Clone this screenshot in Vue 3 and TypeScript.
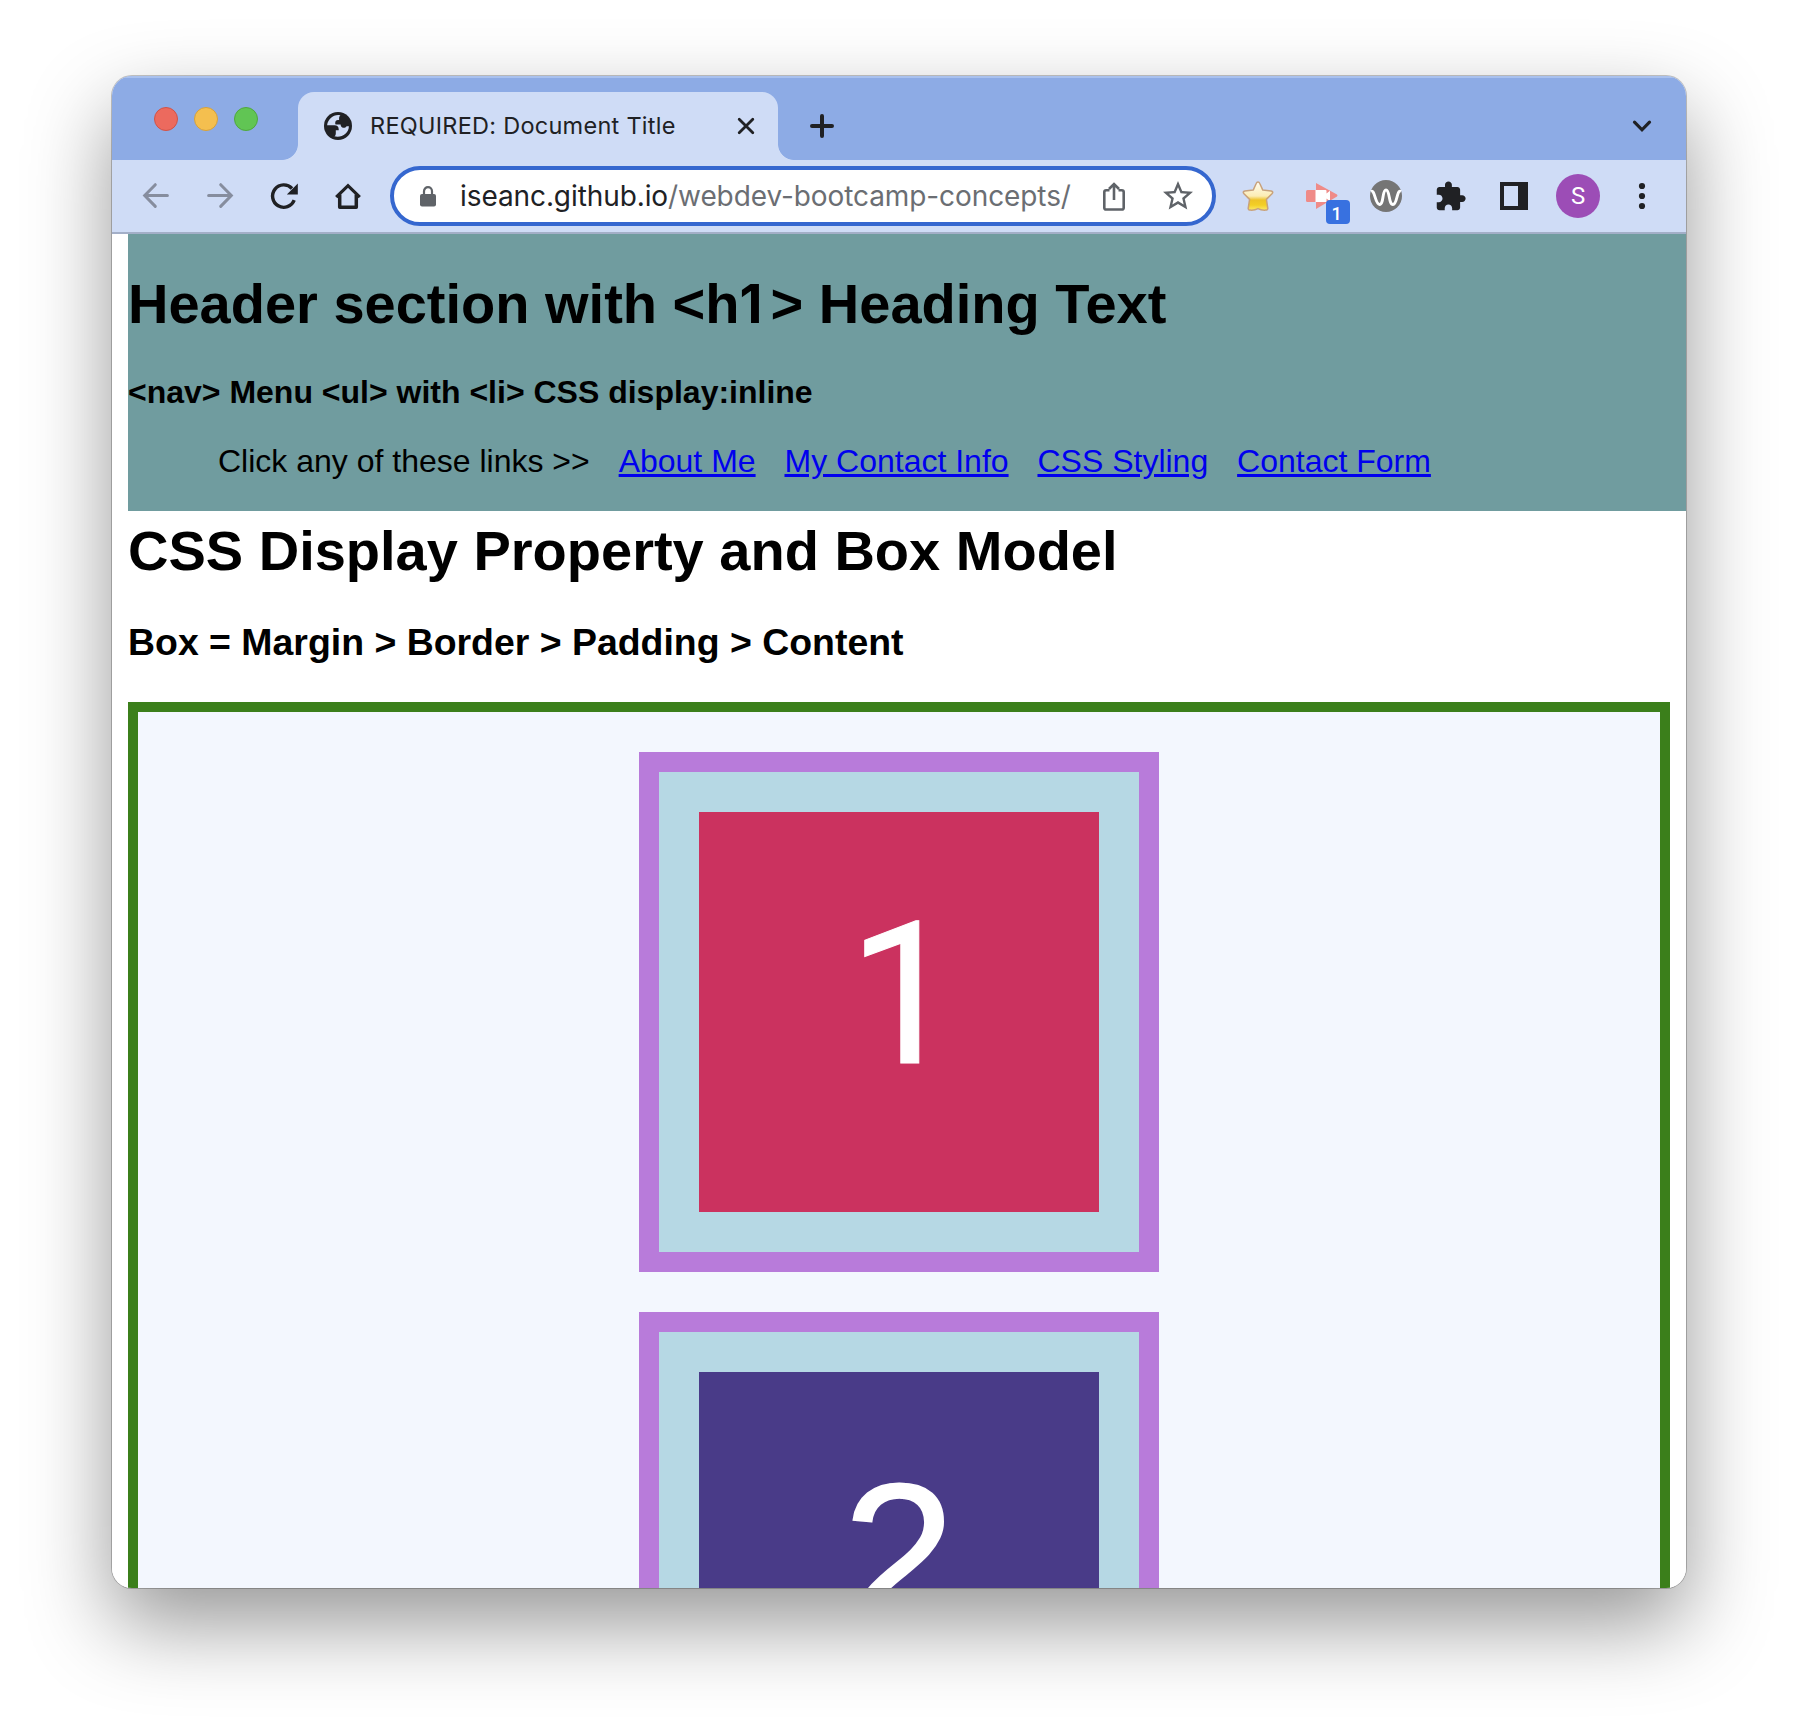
<script setup lang="ts">
interface NavLink {
  label: string
  href: string
}

const links: NavLink[] = [
  { label: 'About Me', href: '#about' },
  { label: 'My Contact Info', href: '#contact' },
  { label: 'CSS Styling', href: '#styling' },
  { label: 'Contact Form', href: '#form' },
]

const boxes: { digit: string; kind: string }[] = [
  { digit: '1', kind: 'one' },
  { digit: '2', kind: 'two' },
]
</script>

<template>
  <div class="desktop">
    <div class="window">
      <div class="tabstrip">
        <div class="lights">
          <span class="light red"></span>
          <span class="light yellow"></span>
          <span class="light green"></span>
        </div>
        <div class="tab">
          <svg class="globe" width="28" height="28" viewBox="0 0 28 28">
            <circle cx="14" cy="14" r="14" fill="#202124" />
            <path
              fill="#cfdcf6"
              d="M15.800 3.200C9.500 2.300 3.900 7 3.100 13.200h7.400c2.600 0 4.200 1.600 4.200 4v1.100h-2.900v3.200c0 1.500-.8 2.600-1.500 2.800C17.500 26.300 24.800 21.300 24.900 14.200h-2.300c-.9 1.200-2.300 1.900-3.700 1.500-1.500-.4-2.300-1.600-2.300-3.100h-4.300c-.8 0-1.100-.8-1.100-1.700 0-1.800 1.100-3 2.700-3h1.200V6.200c0-1.300.6-2.300 1.400-2.900z"
            />
          </svg>
          <span class="title">REQUIRED: Document Title</span>
          <svg class="close" width="20" height="20" viewBox="0 0 20 20">
            <path d="M3.200 3.200l13.600 13.600M16.800 3.200L3.200 16.800" stroke="#202124" stroke-width="2.800" stroke-linecap="round" />
          </svg>
        </div>
        <svg class="plus" width="24" height="24" viewBox="0 0 24 24">
          <path d="M12 2v20M2 12h20" stroke="#202124" stroke-width="4" stroke-linecap="round" />
        </svg>
        <svg class="chevron" width="20" height="14" viewBox="0 0 20 14">
          <path d="M2.500 3.200L10 10.800l7.500-7.600" fill="none" stroke="#202124" stroke-width="3.200" stroke-linecap="round" />
        </svg>
      </div>

      <div class="toolbar">
        <span class="slot">
          <svg width="32" height="32" viewBox="0 0 32 32" fill="none" stroke="#868d9e" stroke-width="3" stroke-linecap="round">
            <path d="M15.300 4.700L4.700 15.500l10.600 10.900M5 15.500h22.400" />
          </svg>
        </span>
        <span class="slot">
          <svg width="32" height="32" viewBox="0 0 32 32" fill="none" stroke="#868d9e" stroke-width="3" stroke-linecap="round">
            <path d="M16.700 4.700l10.600 10.800-10.600 10.900M27 15.500H4.600" />
          </svg>
        </span>
        <span class="slot">
          <svg width="32" height="32" viewBox="0 0 32 32">
            <path d="M26.200 20.200A11.200 11.200 0 1 1 24 8.500" fill="none" stroke="#202124" stroke-width="3.400" />
            <path d="M29.800 3.500v11H18.800z" fill="#202124" />
          </svg>
        </span>
        <span class="slot">
          <svg width="32" height="32" viewBox="0 0 32 32" fill="none" stroke="#202124" stroke-width="3.500">
            <path d="M4.200 17.200L16 5.700l11.800 11.500" stroke-width="3.200" />
            <path d="M7.700 14.500v12.800h16.600V14.500" stroke-linejoin="round" />
          </svg>
        </span>

        <div class="omnibox">
          <svg class="lock" width="16" height="22" viewBox="0 0 16 22">
            <path d="M4 10V6.200a4 4 0 0 1 8 0V10" fill="none" stroke="#5f6368" stroke-width="2.200" />
            <rect x="0" y="9" width="16" height="12.600" rx="2" fill="#5f6368" />
          </svg>
          <span class="url"><span class="host">iseanc.github.io</span>/webdev-bootcamp-concepts/</span>
          <svg class="share" width="32" height="32" viewBox="0 0 32 32" fill="none" stroke="#5f6368" stroke-width="2.600">
            <path d="M11.500 10.200H8.200c-1 0-1.900.8-1.900 1.800v15.700c0 1 .9 1.800 1.900 1.800h15.600c1 0 1.900-.8 1.900-1.800V12c0-1-.9-1.800-1.900-1.800h-3.300" />
            <path d="M16 20V4.500M11 9l5-5 5 5" />
          </svg>
          <svg class="fav" width="36" height="36" viewBox="0 0 24 24" fill="#5f6368">
            <path
              d="M22 9.240l-7.190-.62L12 2 9.190 8.630 2 9.240l5.460 4.730L5.820 21 12 17.270 18.180 21l-1.630-7.030L22 9.240zM12 15.400l-3.760 2.270 1-4.280-3.320-2.880 4.380-.38L12 6.100l1.710 4.040 4.380.38-3.320 2.880 1 4.280L12 15.400z"
            />
          </svg>
        </div>

        <span class="slot">
          <svg width="34" height="34" viewBox="0 0 34 34">
            <defs>
              <linearGradient id="gold" x1="0" y1="0" x2="0" y2="1">
                <stop offset="0" stop-color="#fffdf2" />
                <stop offset=".5" stop-color="#fcecb4" />
                <stop offset=".64" stop-color="#eec328" />
                <stop offset=".82" stop-color="#f3cf25" />
                <stop offset="1" stop-color="#fbe96a" />
              </linearGradient>
            </defs>
            <path
              d="M17 3q1.200 0 1.800 1.500l3 6.600 8.300 1q2.700.6.900 2.600l-5.600 5.700 1.400 9q-.2 1.900-2 1.700-4.600.3-7.800-1.500-3.200 1.800-7.800 1.500-1.800.2-2-1.700l1.400-9L3 14.700q-1.800-2 .9-2.600l8.300-1 3-6.600Q15.800 3 17 3z"
              fill="url(#gold)"
              stroke="#c8a27c"
              stroke-width="1.500"
              stroke-linejoin="round"
            />
          </svg>
        </span>
        <span class="slot">
          <svg width="32" height="32" viewBox="0 0 32 32">
            <path d="M10 3l21 11.500q1 1 0 2L10 29z" fill="#ef8b88" />
            <rect x="0" y="10" width="11" height="12" rx="1.500" fill="#ef8b88" />
            <path d="M9.500 10h10q1 0 1 1v2.500l3.500-2.700v10.400l-3.500-2.700V22h-11z" fill="#fff" />
          </svg>
          <span class="badge">1</span>
        </span>
        <span class="slot">
          <svg width="32" height="32" viewBox="0 0 32 32">
            <circle cx="16" cy="16" r="16" fill="#757575" />
            <path d="M1 11.500C5 9 5 24.500 9.500 24.500S12 10 16 10s2.500 14.500 7 14.500S26.500 9 31 11.500" fill="none" stroke="#fff" stroke-width="2.900" />
          </svg>
        </span>
        <span class="slot">
          <svg width="33" height="33" viewBox="0 0 24 24" fill="#202124">
            <path
              d="M20.500 11H19V7c0-1.100-.9-2-2-2h-4V3.500C13 2.120 11.880 1 10.500 1S8 2.120 8 3.500V5H4c-1.100 0-1.990.9-1.990 2v3.800H3.500c1.490 0 2.700 1.210 2.700 2.700s-1.210 2.700-2.700 2.700H2V20c0 1.100.9 2 2 2h3.800v-1.500c0-1.490 1.210-2.700 2.700-2.700 1.490 0 2.700 1.210 2.700 2.700V22H17c1.100 0 2-.9 2-2v-4h1.500c1.380 0 2.500-1.120 2.500-2.500S21.880 11 20.500 11z"
            />
          </svg>
        </span>
        <span class="slot">
          <svg width="28" height="28" viewBox="0 0 28 28">
            <path d="M0 0h28v28H0zM4 4v20h14V4z" fill="#202124" fill-rule="evenodd" />
          </svg>
        </span>
        <span class="slot"><span class="avatar">S</span></span>
        <span class="slot">
          <svg width="8" height="28" viewBox="0 0 8 28" fill="#202124">
            <circle cx="4" cy="4" r="3.100" />
            <circle cx="4" cy="14" r="3.100" />
            <circle cx="4" cy="24" r="3.100" />
          </svg>
        </span>
      </div>

      <div class="page">
        <header>
          <h1>Header section with &lt;h<span class="numeral">1</span>&gt; Heading Text</h1>
          <nav>
            <h4>&lt;nav&gt; Menu &lt;ul&gt; with &lt;li&gt; CSS display:inline</h4>
            <ul>
              <li>Click any of these links &gt;&gt;</li>
              {{ ' ' }}
              <template v-for="link in links" :key="link.label">
                <li><a :href="link.href">{{ link.label }}</a></li>
                {{ ' ' }}
              </template>
            </ul>
          </nav>
        </header>
        <main>
          <h1>CSS Display Property and Box Model</h1>
          <h3>Box = Margin &gt; Border &gt; Padding &gt; Content</h3>
          <section class="container">
            <div v-for="box in boxes" :key="box.digit" class="box">
              <div class="content" :class="box.kind"><span>{{ box.digit }}</span></div>
            </div>
          </section>
        </main>
      </div>
    </div>
  </div>
</template>

<style>
body {
  margin: 0;
  background: #fff;
}
</style>

<style scoped>
.desktop {
  box-sizing: border-box;
  width: 1798px;
  height: 1736px;
  padding: 76px 112px 0;
  overflow: hidden;
  background: #fff;
}
.window {
  display: flex;
  flex-direction: column;
  width: 1574px;
  height: 1512px;
  border-radius: 20px;
  overflow: hidden;
  background: #fff;
  box-shadow: 0 0 0 1px rgba(0, 0, 0, 0.22), 0 36px 84px rgba(0, 0, 0, 0.41);
}
svg {
  display: block;
  flex: none;
}
.tabstrip {
  display: flex;
  flex: none;
  height: 84px;
  background: #8dabe5;
  box-shadow: inset 0 2px 0 #a9c1ee;
}
.lights {
  display: flex;
  gap: 16px;
  width: 144px;
  padding: 31px 0 0 42px;
}
.light {
  box-sizing: border-box;
  width: 24px;
  height: 24px;
  border-radius: 50%;
  border: 1px solid;
}
.red {
  background: #ec6a5e;
  border-color: #d05347;
}
.yellow {
  background: #f4bf4f;
  border-color: #d5a13c;
}
.green {
  background: #61c554;
  border-color: #50a73e;
}
.tab {
  position: relative;
  display: flex;
  align-items: center;
  box-sizing: border-box;
  width: 480px;
  height: 68px;
  margin-top: 16px;
  padding-left: 26px;
  border-radius: 16px 16px 0 0;
  background: #cfdcf6;
}
.tab::before,
.tab::after {
  content: '';
  position: absolute;
  bottom: 0;
  width: 16px;
  height: 16px;
}
.tab::before {
  left: -16px;
  background: radial-gradient(circle at 0 0, transparent 15.500px, #cfdcf6 16.300px);
}
.tab::after {
  right: -16px;
  background: radial-gradient(circle at 100% 0, transparent 15.500px, #cfdcf6 16.300px);
}
.title {
  width: 366px;
  margin-left: 18px;
  font: 400 23.500px/32px Inter, Roboto, sans-serif;
  letter-spacing: 0.260px;
  color: #202124;
  white-space: nowrap;
}
.plus {
  margin: 38px 0 0 32px;
}
.chevron {
  margin: 43px 34px 0 auto;
}
.toolbar {
  display: flex;
  flex: none;
  align-items: center;
  box-sizing: border-box;
  height: 74px;
  padding: 0 12px;
  border-bottom: 2px solid #a3afc8;
  background: #cfdcf6;
}
.slot {
  position: relative;
  display: flex;
  flex: none;
  align-items: center;
  justify-content: center;
  width: 64px;
  height: 64px;
}
.omnibox {
  display: flex;
  flex: none;
  align-items: center;
  box-sizing: border-box;
  width: 826px;
  height: 60px;
  margin: 0 10px;
  padding-left: 26px;
  border: 4px solid #3567cf;
  border-radius: 30px;
  background: #fff;
}
.url {
  width: 638px;
  margin-left: 24px;
  font: 400 28px/40px Inter, Roboto, sans-serif;
  letter-spacing: -0.090px;
  color: #6b6e73;
  white-space: nowrap;
}
.host {
  color: #202124;
}
.fav {
  margin-left: 30px;
}
.badge {
  position: absolute;
  left: 36px;
  top: 36px;
  width: 24px;
  height: 24px;
  border-radius: 4px;
  background: #3871e0;
  color: #fff;
  font: 500 18px/27px Roboto, sans-serif;
  text-align: center;
  text-indent: -3px;
}
.avatar {
  width: 44px;
  height: 44px;
  border-radius: 50%;
  background: #9c4db6;
  color: #fff;
  font: 400 24px/45px Roboto, sans-serif;
  text-align: center;
}
.page {
  flex: 1;
  min-height: 0;
  padding-left: 16px;
  overflow: hidden;
  background: #fff;
  color: #000;
  font: 32px/36px 'Liberation Sans', Arial, Helvetica, sans-serif;
}
header {
  box-sizing: border-box;
  height: 277px;
  padding-top: 38px;
  background: #709c9f;
}
h1,
h3,
h4,
ul {
  margin: 0;
}
h1 {
  font-size: 56px;
  line-height: 64px;
  white-space: nowrap;
}
.numeral {
  display: inline-block;
  width: 0.585em;
  font-family: Inter, Roboto, sans-serif;
  font-size: 0.950em;
  line-height: 1;
}
h4 {
  margin-top: 38px;
  font-size: 32px;
  line-height: 36px;
}
ul {
  margin-top: 33px;
  padding-left: 80px;
  list-style: none;
  white-space: nowrap;
}
li {
  display: inline;
  padding: 0 10px;
}
a {
  color: #0000ee;
  text-decoration: underline;
  text-decoration-thickness: 3px;
}
main {
  padding-right: 16px;
}
main h1 {
  padding-top: 8px;
}
h3 {
  margin: 38px 0;
  font-size: 37.440px;
  line-height: 43px;
}
.container {
  display: flex;
  flex-direction: column;
  align-items: center;
  gap: 40px;
  height: 1400px;
  padding-top: 40px;
  border: 10px solid #3b7f1b;
  background: #f3f7fe;
}
.box {
  flex: none;
  width: 400px;
  height: 400px;
  padding: 40px;
  border: 20px solid #b87bda;
  background: #b6d8e4;
}
.content {
  height: 400px;
  color: #fff;
  text-align: center;
}
.one {
  background: #cb325f;
  font: 198px/367px Roboto, sans-serif;
  text-indent: 10px;
  -webkit-text-stroke: 1px #fff;
}
.two {
  background: #493b88;
  font-size: 204px;
  line-height: 367px;
  -webkit-text-stroke: 1.500px #fff;
}
</style>
